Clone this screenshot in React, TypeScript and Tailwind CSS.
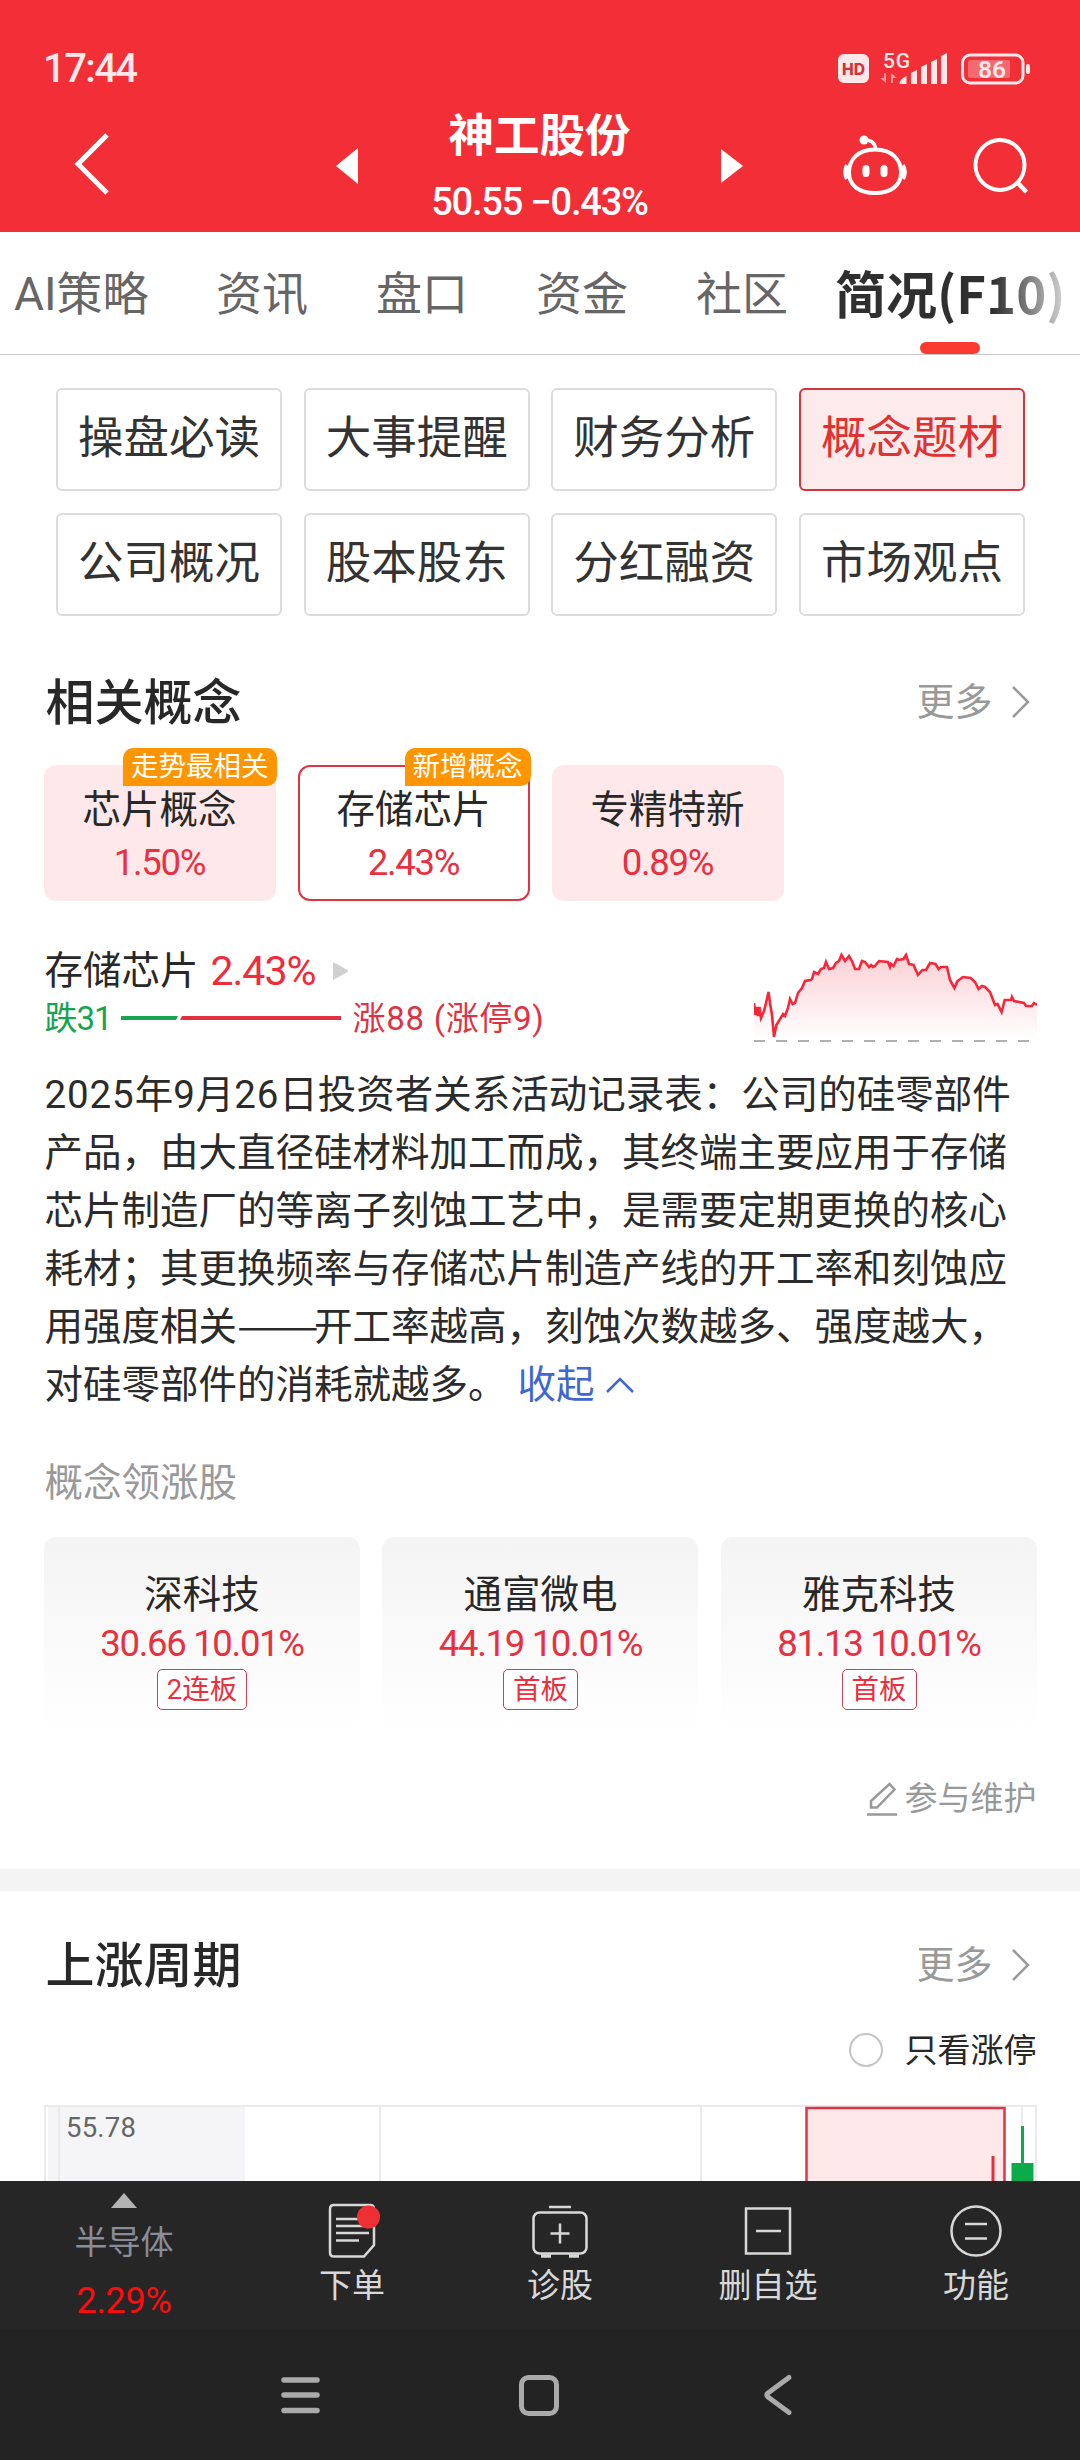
import clsx from "clsx";

// --- Static data ---
const tabs = [
  { label: "AI策略", width: "w-[134px]" },
  { label: "资讯", width: "w-[92px]" },
  { label: "盘口", width: "w-[92px]" },
  { label: "资金", width: "w-[92px]" },
  { label: "社区", width: "w-[92px]" },
];

const shortcuts = [
  "操盘必读", "大事提醒", "财务分析", "概念题材",
  "公司概况", "股本股东", "分红融资", "市场观点",
];

const concepts = [
  { name: "芯片概念", change: "1.50%", tag: "走势最相关" },
  { name: "存储芯片", change: "2.43%", tag: "新增概念", active: true },
  { name: "专精特新", change: "0.89%" },
];

const leaders = [
  { name: "深科技", price: "30.66", change: "10.01%", tag: "2连板" },
  { name: "通富微电", price: "44.19", change: "10.01%", tag: "首板" },
  { name: "雅克科技", price: "81.13", change: "10.01%", tag: "首板" },
];

const descriptionLines = [
  "2025年9月26日投资者关系活动记录表：公司的硅零部件",
  "产品，由大直径硅材料加工而成，其终端主要应用于存储",
  "芯片制造厂的等离子刻蚀工艺中，是需要定期更换的核心",
  "耗材；其更换频率与存储芯片制造产线的开工率和刻蚀应",
  "用强度相关——开工率越高，刻蚀次数越多、强度越大，",
];

const trend =
  "0,53 1.5,65 3,57 4,66 5.5,57 7,68 10,61 12,53 14.5,42 16,53 18,65 20,87 22.4,75 25.5,70 29,64 31,66 34,58 36,49 38.6,54 41,53 44,43 48,38 51,31 56.5,30 58,29 60,22 64,24 67,19 70,18 72,12 75,19 79,18 82,13 85,11 87.5,5 91,11 95,6 98,11 101,19 105,19 108,11 111,12 115,17 117,15 119,17 121,16 125,11 134,12 136,17 137,14 139.5,16 143,9 145,10 149.5,9 152,5 155,14 159.5,15 164,25 168.4,20 172,20 176,13 181.5,14 184.6,19 187,17 193,17 196,30 200.4,38 203.5,31 209,27 216.6,28 221,32 224.5,39 228,36 231,37 236,42 241,55 243.5,54 247.6,62 250.7,50 257,50 258,47 260,51 270,53 272,56 278,56 280,53 283,55";

// --- Icons ---
const StatusIcons = () => (
  <svg width="194" height="36" viewBox="0 0 194 36" fill="#fde8e9">
    <rect x="0" y="4" width="31" height="29" rx="6" />
    <text x="15.5" y="24.500" textAnchor="middle" fontSize="16" fontWeight="800" fill="#d9303a" textLength="23" lengthAdjust="spacingAndGlyphs" className="font-['Inter',sans-serif]">HD</text>
    <text x="45" y="17.5" fontSize="21" fontWeight="500" textLength="27" className="font-['Roboto',sans-serif]">5G</text>
    <path d="M48 23v10l-6-5h4v-5zM53 33V23l6 5h-4v5z" opacity="0.55" />
    <path d="M61.500 34q0-5 7-8v8zM73 23l6-3v14h-6zM83 17l6-3v20h-6zM93 12l6-3v25h-6zM103 6l6-3v31h-6z" />
    <rect x="124.500" y="5" width="60.500" height="28" rx="7.500" fill="none" stroke="#fde8e9" strokeWidth="3" />
    <rect x="130" y="10" width="42" height="18" rx="2" opacity="0.32" />
    <rect x="188" y="14" width="4" height="10" rx="2" />
    <text x="154" y="27.500" textAnchor="middle" fontSize="24.500" fontWeight="600" className="font-['Roboto',sans-serif]">86</text>
  </svg>
);

const RobotIcon = () => (
  <svg width="64" height="60" viewBox="0 0 64 60" fill="none" stroke="#fff" strokeWidth="4">
    <circle cx="21" cy="5" r="4.500" fill="#fff" stroke="none" />
    <path d="M22 5c7 0 10 3 10.500 9" strokeWidth="3.500" />
    <path d="M32 14.500c17 0 26 10 26 23S48 58 32 58 6 50.500 6 37.500s9-23 26-23z" />
    <path d="M4.500 30.500c-2.500 3-2.500 10 0 13M59.500 30.500c2.500 3 2.500 10 0 13" strokeWidth="5" />
    <path d="M23 33.500v5M41 33.500v5" strokeWidth="7" strokeLinecap="round" />
  </svg>
);

const SearchIcon = () => (
  <svg width="56" height="58" viewBox="0 0 56 58" fill="none" stroke="#fff" strokeWidth="4">
    <ellipse cx="27" cy="29" rx="24.500" ry="25" />
    <path d="M44 46l9.500 10" strokeWidth="4.500" />
  </svg>
);

const ChevronRight = () => (
  <svg width="19" height="34" viewBox="0 0 19 34" fill="none" stroke="#999" strokeWidth="2.500">
    <path d="M2 2l15 15L2 32" />
  </svg>
);

const PencilIcon = () => (
  <svg width="30" height="34" viewBox="0 0 30 34" fill="none" stroke="#999" strokeWidth="2.500">
    <path d="M4 25.500V19L22.500 2l5 5.500L10 25.500zM0 32.500h30" />
  </svg>
);

const OrderIcon = () => (
  <svg width="52" height="56" viewBox="0 0 52 56" fill="none" stroke="#d8d8d8" strokeWidth="2.500" className="ml-[3px]">
    <path d="M6 2h36q4 0 4 4v36L36 53.500H6q-4 0-4-4V6q0-4 4-4z" />
    <path d="M8 16h28M8 23h33M8 30h33M8 37.500h23" />
    <circle cx="40.500" cy="14" r="11.500" fill="#ee3035" stroke="none" />
  </svg>
);

const DiagnoseIcon = () => (
  <svg width="56" height="54" viewBox="0 0 56 54" fill="none" stroke="#d8d8d8" strokeWidth="2.500">
    <rect x="1.500" y="8.500" width="53" height="41" rx="6" />
    <path d="M17 3h22M28 19.500v20M18.500 29.500h19" />
    <path d="M9 52h10M37 52h10" strokeWidth="3.500" />
  </svg>
);

const RemoveIcon = () => (
  <svg width="48" height="48" viewBox="0 0 48 48" fill="none" stroke="#d8d8d8" strokeWidth="2.500">
    <path d="M2 1.500h44v45H2zM12 24h25" />
  </svg>
);

const FunctionIcon = () => (
  <svg width="52" height="52" viewBox="0 0 52 52" fill="none" stroke="#d8d8d8" strokeWidth="2.500">
    <circle cx="26" cy="26" r="24.500" />
    <path d="M15 19h22M15 33.500h22" />
  </svg>
);

// --- Sections ---
const Header = () => (
  <header className="h-[232px] bg-[#f22f37] text-white">
    <div className="flex h-[100px] items-center justify-between pl-[43px] pr-[48px] pt-9">
      <span className="pt-0.5 text-[40px] leading-none font-medium tracking-[-1.6px] text-[#fde8e9]">17:44</span>
      <StatusIcons />
    </div>
    <div className="flex h-[132px] items-center pl-[74px]">
      <svg width="36" height="62" viewBox="0 0 36 62" fill="none" stroke="#fff" strokeWidth="5" className="mb-1 shrink-0">
        <path d="M33 2L4 31l29 29" />
      </svg>
      <svg width="22" height="36" viewBox="0 0 22 36" fill="#fff" className="ml-[226px] shrink-0">
        <path d="M22 0v36L0 18z" />
      </svg>
      <div className="flex h-full w-[363px] flex-col items-center">
        <h1 className="mt-[14px] text-[45.500px] leading-[46px] font-bold">神工股份</h1>
        <span className="mt-[23px] text-[38px] leading-[38px] font-medium tracking-[-1.2px]">50.55 −0.43%</span>
      </div>
      <svg width="22" height="34" viewBox="0 0 22 34" fill="#fff" className="shrink-0">
        <path d="M0 0v34l22-17z" />
      </svg>
      <div className="ml-[100px] flex items-center gap-[66px] pb-0.5">
        <RobotIcon />
        <SearchIcon />
      </div>
    </div>
  </header>
);

const TabBar = () => (
  <nav className="flex h-[123px] items-center border-b border-[#c8c8c8] pl-3.5 text-[46px] leading-none text-[#666]">
    <div className="flex gap-[68px]">
      {tabs.map((t) => (
        <span key={t.label} className={clsx("pt-0.5 whitespace-nowrap", t.width)}>{t.label}</span>
      ))}
    </div>
    <div className="relative ml-[47px] flex h-full items-center">
      <span className="bg-linear-to-r from-[#2f2f2f] from-68% to-[#d8d8d8] bg-clip-text pb-[3px] text-[51px] leading-[60px] font-bold whitespace-nowrap text-transparent font-['Noto_Sans_CJK_SC',sans-serif]">
        简况(F10)
      </span>
      <span className="absolute bottom-0 left-[85px] h-3 w-[60px] rounded-full bg-[#f93a30]" />
    </div>
  </nav>
);

const Shortcuts = () => (
  <div className="mt-[33px] grid grid-cols-[repeat(4,226px)] justify-between gap-y-[22px] pl-[56px] pr-[55px]">
    {shortcuts.map((s) => (
      <button
        key={s}
        className={clsx(
          "h-[103px] rounded-md border-2 pb-0.5 text-[45.500px] leading-none",
          s === "概念题材" ? "border-[#d0373c] bg-[#fdebeb] text-[#e03232]" : "border-[#dcdcdc] text-[#333]"
        )}
      >
        {s}
      </button>
    ))}
  </div>
);

const SectionTitle = ({ title }: { title: string }) => (
  <div className="flex h-[60px] items-center justify-between">
    <h2 className="pt-0.5 pl-0.5 text-[49px] leading-none font-medium text-[#282828]">{title}</h2>
    <div className="flex items-center gap-[18px] pr-[7px] text-[38px] leading-none text-[#999]">
      更多
      <ChevronRight />
    </div>
  </div>
);

const ConceptCards = () => (
  <div className="mt-[33px] flex gap-[22px]">
    {concepts.map((c) => (
      <div
        key={c.name}
        className={clsx(
          "relative flex h-[136px] w-[232px] flex-col items-center rounded-xl border-2",
          c.active ? "border-[#df3443]" : "border-[#fee8ea] bg-[#fee8ea]"
        )}
      >
        {c.tag && (
          <span className="absolute -top-[19px] -right-[3px] h-[38px] rounded-[10px] rounded-bl-none bg-[#ff9500] px-2 text-[27.500px] leading-[37px] text-white">
            {c.tag}
          </span>
        )}
        <span className="mt-[22px] text-[38.500px] leading-[42px] text-[#282828]">{c.name}</span>
        <span className="mt-[12px] text-[36.500px] leading-[40px] tracking-[-1.3px] text-[#e8303f]">{c.change}</span>
      </div>
    ))}
  </div>
);

const ConceptSummary = () => (
  <div className="mt-[49px] flex justify-between">
    <div className="pl-px">
      <div className="flex h-[42px] items-center text-[38.500px] leading-none text-[#282828]">
        存储芯片
        <span className="ml-3 text-[41px] tracking-[-1px] text-[#f02c3a]">2.43%</span>
        <svg width="15" height="18" viewBox="0 0 15 18" fill="#d0d0d0" className="ml-[18px]">
          <path d="M0 1q0-1 1-.5L14.500 8q1 1 0 2L1 17.500q-1 .5-1-.5z" />
        </svg>
      </div>
      <div className="mt-[6px] flex h-[40px] items-center text-[33px] leading-none">
        <span className="tracking-[-1px] text-[#17a34f]">跌31</span>
        <svg width="220" height="4" viewBox="0 0 220 4" className="mr-3 ml-[9px]">
          <path d="M0 0h57l-2 4H0z" fill="#17a34f" />
          <path d="M61 0h159v4H59z" fill="#e0313f" />
        </svg>
        <span className="tracking-[0.7px] text-[#de3344]">涨88 (涨停9)</span>
      </div>
    </div>
    <svg width="283" height="94" viewBox="0 0 283 94" fill="none">
      <defs>
        <linearGradient id="trendFill" x1="0" y1="0" x2="0" y2="1">
          <stop offset="0" stopColor="#fbd0d4" />
          <stop offset="1" stopColor="#ffffff" />
        </linearGradient>
      </defs>
      <polygon points={`0,90 ${trend} 283,90`} fill="url(#trendFill)" />
      <polyline points={trend} stroke="#f5283a" strokeWidth="2.600" />
      <path d="M0 91h283" stroke="#b0b0b0" strokeWidth="2" strokeDasharray="11 11" />
    </svg>
  </div>
);

// Digits get a little tracking, the double dash is stretched to two full characters
const DescriptionLine = ({ text }: { text: string }) => (
  <p>
    {text.split(/(\d+|——)/).map((part, i) => {
      if (part === "——") {
        return (
          <span key={i} className="mr-4 inline-block w-[61px] origin-left scale-x-[1.27] leading-none font-['Noto_Sans_CJK_SC',sans-serif]">
            {part}
          </span>
        );
      }
      if (/^\d/.test(part)) return <span key={i} className="tracking-[0.9px]">{part}</span>;
      return part;
    })}
  </p>
);

const Description = () => (
  <div className="mt-[22px] pl-px text-[38.500px] leading-[58px] whitespace-nowrap text-[#2b2b2b]">
    {descriptionLines.map((line) => (
      <div key={line} className="h-[58px]">
        <DescriptionLine text={line} />
      </div>
    ))}
    <p className="flex items-center">
      对硅零部件的消耗就越多。
      <span className="ml-[11px] text-[#4066cf]">收起</span>
      <svg width="28" height="16" viewBox="0 0 28 16" fill="none" stroke="#4066cf" strokeWidth="2.500" className="ml-[11px]">
        <path d="M1 15L14 2l13 13" />
      </svg>
    </p>
  </div>
);

const Leaders = () => (
  <>
    <div className="mt-[50px] pl-px text-[38.500px] leading-[38px] text-[#999]">概念领涨股</div>
    <div className="mt-[35px] flex justify-between">
      {leaders.map((s) => (
        <div key={s.name} className="flex h-[196px] w-[316px] flex-col items-center rounded-xl bg-linear-to-b from-[#f4f4f4] to-white pl-px">
          <span className="mt-[38px] text-[38.500px] leading-[40px] text-[#282828]">{s.name}</span>
          <span className="mt-[9px] text-[36.500px] leading-[40px] tracking-[-1.3px] text-[#e8303f]">
            {s.price} {s.change}
          </span>
          <span className="mt-[5px] h-[41px] rounded-[5px] border border-[#c24553] bg-white px-[9px] text-[27.500px] leading-[39px] text-[#e8303f]">
            {s.tag}
          </span>
        </div>
      ))}
    </div>
  </>
);

// Only the top of the k-line area is visible above the toolbar
const CycleChart = () => (
  <svg width="993" height="76" viewBox="0 0 993 76" className="block">
    <rect x="4" y="2" width="197" height="74" fill="#f5f5f8" />
    <path d="M0 1h993M1 0v76M15 2v74M336 2v74M657 2v74M978 2v74M992 0v76" stroke="#ebebec" strokeWidth="2" />
    <text x="22" y="32" fontSize="27.500" fill="#666" textLength="70" className="font-['Roboto',sans-serif]">55.78</text>
    <path d="M762.500 76V3h198v73" fill="#fee8ea" stroke="#df3443" strokeWidth="2.500" />
    <path d="M949 51v25" stroke="#e02f3d" strokeWidth="3" />
    <path d="M978.500 21v40" stroke="#0bab4b" strokeWidth="3" />
    <rect x="967.500" y="58" width="22" height="18" fill="#0bab4b" />
  </svg>
);

const ToolbarItem = ({ icon, label }: { icon: React.ReactNode; label: string }) => (
  <div className="flex w-[208px] flex-col items-center pt-[21px]">
    <div className="flex h-[57px] items-center">{icon}</div>
    <span className="mt-[10px] text-[33px] leading-[34px] text-[#d8d8d8]">{label}</span>
  </div>
);

const Toolbar = () => (
  <div className="flex h-[149px] bg-[#262626]">
    <div className="flex w-[248px] flex-col items-center">
      <svg width="26" height="15" viewBox="0 0 26 15" fill="#b3b3b3" className="mt-3">
        <path d="M13 0l13 15H0z" />
      </svg>
      <span className="mt-[18px] text-[33px] leading-[34px] text-[#8a8c98]">半导体</span>
      <span className="mt-[23px] text-[36px] leading-[36px] tracking-[-0.3px] text-[#fb0d0d]">2.29%</span>
    </div>
    <ToolbarItem icon={<OrderIcon />} label="下单" />
    <ToolbarItem icon={<DiagnoseIcon />} label="诊股" />
    <ToolbarItem icon={<RemoveIcon />} label="删自选" />
    <ToolbarItem icon={<FunctionIcon />} label="功能" />
  </div>
);

const SystemNav = () => (
  <div className="flex h-[130px] items-center gap-[198px] bg-[#232323] pl-[280px]">
    <svg width="40" height="42" viewBox="0 0 40 42" stroke="#aaa" strokeWidth="5.500" strokeLinecap="round">
      <path d="M4 6h33M4 21h33M4 36.500h33" />
    </svg>
    <svg width="42" height="42" viewBox="0 0 42 42" fill="none" stroke="#aaa" strokeWidth="5">
      <rect x="3.500" y="3.500" width="35" height="36" rx="7" />
    </svg>
    <svg width="42" height="42" viewBox="0 0 42 42" fill="none" stroke="#aaa" strokeWidth="5" strokeLinecap="round" strokeLinejoin="round" className="ml-[3px]">
      <path d="M28 3.500L7 19q-2.500 2 0 4l21 15.500" />
    </svg>
  </div>
);

export default function App() {
  return (
    <div className="flex h-[2460px] w-[1080px] flex-col overflow-hidden bg-white font-['Roboto','Noto_Sans_CJK_SC',sans-serif]">
      <Header />
      <TabBar />
      <Shortcuts />
      <section className="mt-[56px] px-[43.500px]">
        <SectionTitle title="相关概念" />
        <ConceptCards />
        <ConceptSummary />
        <Description />
        <Leaders />
        <div className="mt-[46px] flex items-center justify-end gap-[8px] text-[33px] leading-[40px] text-[#999]">
          <PencilIcon />
          参与维护
        </div>
      </section>
      <div className="mt-[50px] h-[22px] shrink-0 bg-[#f4f4f4]" />
      <section className="min-h-0 flex-1 overflow-hidden px-[43.500px] pt-[44px]">
        <SectionTitle title="上涨周期" />
        <div className="mt-[34px] flex h-[42px] items-center justify-end gap-[22px] text-[33px] leading-none text-[#282828]">
          <span className="size-[34px] rounded-full border-2 border-[#c4c4c4]" />
          只看涨停
        </div>
        <div className="mt-[34px]">
          <CycleChart />
        </div>
      </section>
      <Toolbar />
      <SystemNav />
    </div>
  );
}
